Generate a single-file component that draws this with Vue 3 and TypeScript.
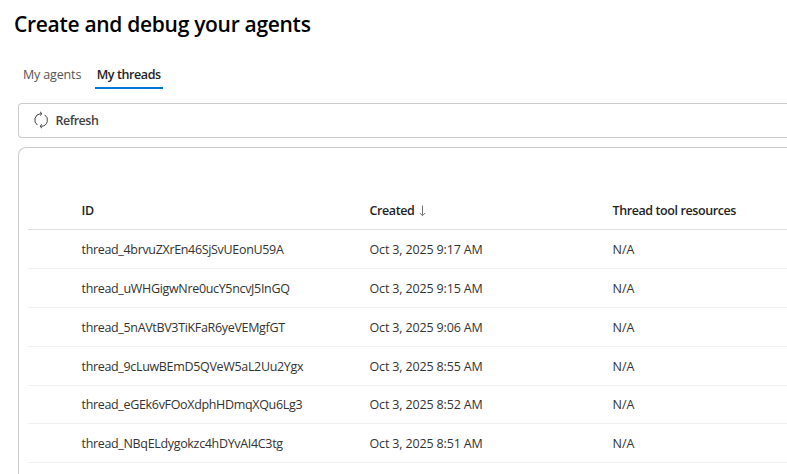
<script setup lang="ts">
interface Thread {
  id: string
  created: string
  resources: string
}

const tabs: string[] = ['My agents', 'My threads']
const activeTab = 'My threads'

const threads: Thread[] = [
  { id: 'thread_4brvuZXrEn46SjSvUEonU59A', created: 'Oct 3, 2025 9:17 AM', resources: 'N/A' },
  { id: 'thread_uWHGigwNre0ucY5ncvJ5InGQ', created: 'Oct 3, 2025 9:15 AM', resources: 'N/A' },
  { id: 'thread_5nAVtBV3TiKFaR6yeVEMgfGT', created: 'Oct 3, 2025 9:06 AM', resources: 'N/A' },
  { id: 'thread_9cLuwBEmD5QVeW5aL2Uu2Ygx', created: 'Oct 3, 2025 8:55 AM', resources: 'N/A' },
  { id: 'thread_eGEk6vFOoXdphHDmqXQu6Lg3', created: 'Oct 3, 2025 8:52 AM', resources: 'N/A' },
  { id: 'thread_NBqELdygokzc4hDYvAI4C3tg', created: 'Oct 3, 2025 8:51 AM', resources: 'N/A' },
]
</script>

<template>
  <main class="page">
    <h1 class="title">Create and debug your agents</h1>
    <nav class="tabs">
      <button v-for="tab in tabs" :key="tab" class="tab" :class="{ active: tab === activeTab }">
        {{ tab }}
      </button>
    </nav>
    <div class="toolbar">
      <button class="refresh">
        <svg class="refresh-icon" width="16" height="18" viewBox="0 0 16 18" fill="none" stroke="#424242">
          <path d="M4.3 14A6.3 6.3 0 0 1 7.5 2.7h1.2M11.7 3.8A6.3 6.3 0 0 1 8.5 15.3H7.3" />
          <path d="M7 .8l2 1.9-2 1.9M9 13.4l-2 1.9 2 1.9" />
        </svg>
        <span>Refresh</span>
      </button>
    </div>
    <section class="card">
      <div class="row head">
        <span>ID</span>
        <span class="sorted">
          <span>Created</span>
          <svg width="8" height="12" viewBox="0 0 8 12" fill="none" stroke="#707070">
            <path d="M3.5 .5v10M.8 8l2.7 2.7L6.2 8" />
          </svg>
        </span>
        <span>Thread tool resources</span>
      </div>
      <div v-for="thread in threads" :key="thread.id" class="row">
        <span class="id">{{ thread.id }}</span>
        <span class="date">{{ thread.created }}</span>
        <span>{{ thread.resources }}</span>
      </div>
    </section>
  </main>
</template>

<style>
body {
  background: #fff;
  overflow: hidden;
}
</style>

<style scoped>
.page {
  box-sizing: border-box;
  height: 474px;
  overflow: hidden;
  padding: 10px 0 0 14px;
  display: flex;
  flex-direction: column;
  font-family: 'Segoe UI', 'Open Sans', sans-serif;
  font-size: 12.5px;
  color: #333;
  white-space: nowrap;
}
.title {
  margin: 0;
  font-size: 21px;
  line-height: 28px;
  font-weight: 600;
  letter-spacing: -0.3px;
  color: #000;
}
button {
  border: 0;
  padding: 0;
  background: none;
  font: inherit;
  color: inherit;
}
.tabs {
  display: flex;
  gap: 11.5px;
  margin: 23px 0 0 7px;
}
.tab {
  height: 28px;
  padding: 2px 2px 0;
  line-height: 24px;
  color: #555;
  border-bottom: 2px solid transparent;
  box-sizing: border-box;
  letter-spacing: -0.15px;
}
.tab.active {
  font-weight: 600;
  color: #242424;
  border-bottom-color: #0078d4;
  letter-spacing: -0.4px;
}
.toolbar {
  flex: none;
  box-sizing: border-box;
  height: 35px;
  margin: 14px 0 0 4px;
  padding-left: 14px;
  display: flex;
  align-items: center;
  border: 1px solid #ccc;
  border-right: 0;
  border-radius: 4px 0 0 4px;
}
.refresh {
  display: flex;
  align-items: center;
  gap: 6.5px;
  font-weight: 600;
  letter-spacing: -0.5px;
  color: #424242;
}
.refresh-icon {
  margin-bottom: 1px;
}
.card {
  flex: none;
  height: 340px;
  margin: 9px 0 0 4px;
  padding: 43.6px 0 0 9px;
  border: 1px solid #ccc;
  border-right: 0;
  border-radius: 8px 0 0 0;
}
.row {
  box-sizing: border-box;
  height: 38.8px;
  display: grid;
  grid-template-columns: 288px 243px 1fr;
  align-items: center;
  padding: 0.8px 0 0 53.5px;
  border-bottom: 1px solid #f0f0f0;
}
.head {
  font-weight: 600;
  color: #242424;
  border-bottom-color: #e0e0e0;
  letter-spacing: -0.4px;
}
.id {
  letter-spacing: -0.33px;
}
.date {
  letter-spacing: -0.15px;
}
.sorted {
  display: flex;
  align-items: center;
  gap: 5px;
}
</style>
